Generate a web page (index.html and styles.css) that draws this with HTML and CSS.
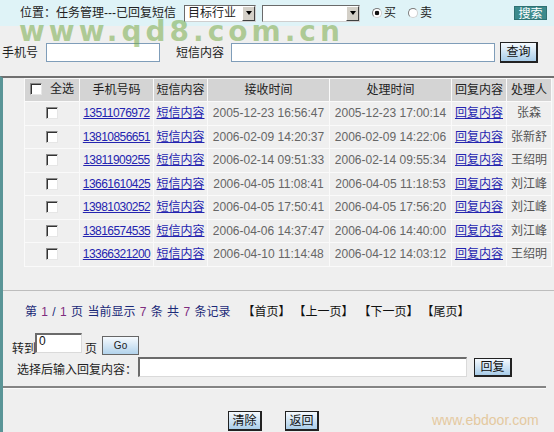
FILE: index.html
```html
<!DOCTYPE html>
<html lang="zh-CN">
<head>
<meta charset="utf-8">
<title>已回复短信</title>
<link rel="stylesheet" href="styles.css">
</head>
<body>
<div class="topbar">
  <span class="loc">位置：任务管理---已回复短信</span>
  <div class="select s1"><span class="sv">目标行业</span><span class="arr"></span></div>
  <div class="select s2"><span class="sv"></span><span class="arr"></span></div>
  <label class="rad"><input type="radio" name="bs" class="radio" checked><span>买</span></label>
  <label class="rad r2"><input type="radio" name="bs" class="radio"><span>卖</span></label>
  <span class="btn-search">搜索</span>
</div>
<div class="filter">
  <span class="lbl">手机号</span>
  <input type="text" class="txt in1">
  <span class="lbl l2">短信内容</span>
  <input type="text" class="txt in2">
  <button class="btn b-query">查询</button>
</div>
<div class="main">
  <div class="panel">
    <table class="grid">
      <colgroup>
        <col class="w1"><col class="w2"><col class="w3"><col class="w4"><col class="w5"><col class="w6"><col class="w7">
      </colgroup>
      <thead>
        <tr><th><span class="allsel"><input type="checkbox" class="chk"><span>全选</span></span></th><th>手机号码</th><th>短信内容</th><th>接收时间</th><th>处理时间</th><th>回复内容</th><th>处理人</th></tr>
      </thead>
      <tbody>
        <tr><td><input type="checkbox" class="chk"></td><td><a class="num" href="#">13511076972</a></td><td><a href="#">短信内容</a></td><td class="dt">2005-12-23 16:56:47</td><td class="dt">2005-12-23 17:00:14</td><td><a href="#">回复内容</a></td><td class="nm">张森</td></tr>
        <tr><td><input type="checkbox" class="chk"></td><td><a class="num" href="#">13810856651</a></td><td><a href="#">短信内容</a></td><td class="dt">2006-02-09 14:20:37</td><td class="dt">2006-02-09 14:22:06</td><td><a href="#">回复内容</a></td><td class="nm">张新舒</td></tr>
        <tr><td><input type="checkbox" class="chk"></td><td><a class="num" href="#">13811909255</a></td><td><a href="#">短信内容</a></td><td class="dt">2006-02-14 09:51:33</td><td class="dt">2006-02-14 09:55:34</td><td><a href="#">回复内容</a></td><td class="nm">王绍明</td></tr>
        <tr><td><input type="checkbox" class="chk"></td><td><a class="num" href="#">13661610425</a></td><td><a href="#">短信内容</a></td><td class="dt">2006-04-05 11:08:41</td><td class="dt">2006-04-05 11:18:53</td><td><a href="#">回复内容</a></td><td class="nm">刘江峰</td></tr>
        <tr><td><input type="checkbox" class="chk"></td><td><a class="num" href="#">13981030252</a></td><td><a href="#">短信内容</a></td><td class="dt">2006-04-05 17:50:41</td><td class="dt">2006-04-05 17:56:20</td><td><a href="#">回复内容</a></td><td class="nm">刘江峰</td></tr>
        <tr><td><input type="checkbox" class="chk"></td><td><a class="num" href="#">13816574535</a></td><td><a href="#">短信内容</a></td><td class="dt">2006-04-06 14:37:47</td><td class="dt">2006-04-06 14:40:00</td><td><a href="#">回复内容</a></td><td class="nm">刘江峰</td></tr>
        <tr><td><input type="checkbox" class="chk"></td><td><a class="num" href="#">13366321200</a></td><td><a href="#">短信内容</a></td><td class="dt">2006-04-10 11:14:48</td><td class="dt">2006-04-12 14:03:12</td><td><a href="#">回复内容</a></td><td class="nm">王绍明</td></tr>
      </tbody>
    </table>
  </div>
  <div class="pager">
    <span class="info">第 <b>1</b> / <b>1</b> 页 当前显示 <b>7</b> 条 共 <b>7</b> 条记录</span>
    <span class="nav first">【首页】</span>
    <span class="nav">【上一页】</span>
    <span class="nav third">【下一页】</span>
    <span class="nav">【尾页】</span>
  </div>
  <div class="goto">
    <span class="t">转到</span>
    <input type="text" class="inset in-page" value="0">
    <span class="t t-ye">页</span>
    <button class="btn-go">Go</button>
  </div>
  <div class="reply">
    <span class="t">选择后输入回复内容：</span>
    <input type="text" class="inset in-reply">
    <button class="btn b-reply">回复</button>
  </div>
  <div class="rule"></div>
  <div class="actions">
    <button class="btn b-act">清除</button>
    <button class="btn b-act">返回</button>
  </div>
</div>
<div class="wm-top">www.qd8.com.cn</div>
<div class="wm-bottom">www.ebdoor.com</div>
</body>
</html>
```

FILE: styles.css
```css
* { box-sizing: border-box; }
html, body { margin: 0; padding: 0; }
body {
  width: 554px;
  height: 432px;
  overflow: hidden;
  position: relative;
  background: #efefef;
  color: #222;
  font-family: "Liberation Sans", "Noto Sans CJK SC", sans-serif;
  font-size: 12px;
  line-height: 16px;
}

/* top bar */
.topbar {
  height: 26px;
  background: #dff3f7;
  display: flex;
  align-items: center;
  padding-left: 20px;
}
.loc { width: 164px; white-space: nowrap; color: #222; }
.select {
  display: flex;
  height: 17px;
  background: #fff;
  border: 1px solid #6a6a6a;
  border-right-color: #cfcfcf;
  border-bottom-color: #cfcfcf;
}
.s1 { width: 72px; }
.s2 { width: 98px; margin-left: 6px; }
.sv { flex: 1; padding-left: 3px; line-height: 15px; white-space: nowrap; }
.arr {
  width: 13px;
  background: #d4d0c8;
  border-top: 1px solid #fff;
  border-left: 1px solid #fff;
  border-right: 1px solid #404040;
  border-bottom: 1px solid #404040;
  display: flex;
  align-items: center;
  justify-content: center;
}
.arr::after {
  content: "";
  border-left: 3px solid transparent;
  border-right: 3px solid transparent;
  border-top: 4px solid #000;
}
.rad { display: flex; align-items: center; margin-left: 12px; }
.rad span { margin-left: 2px; }
.radio {
  appearance: none;
  -webkit-appearance: none;
  width: 10px;
  height: 10px;
  margin: 0;
  border-radius: 50%;
  border: 1px solid #7a7a7a;
  border-right-color: #d0d0d0;
  border-bottom-color: #d0d0d0;
  background: #fff;
}
.radio:checked { background: radial-gradient(circle, #111 0 2px, #fff 2.6px); }
.btn-search {
  margin-left: auto;
  margin-right: 7px;
  width: 33px;
  height: 14px;
  line-height: 14px;
  text-align: center;
  color: #fff;
  background: #3b8a8c;
  border: 1px solid #2f7173;
}

/* filter row */
.filter {
  height: 50px;
  padding-top: 3px;
  padding-left: 2px;
  display: flex;
  align-items: center;
}
.lbl { white-space: nowrap; }
.txt {
  height: 19px;
  margin: 0;
  padding: 0 2px;
  background: #fff;
  border: 1px solid #7f9db9;
  font: inherit;
}
.in1 { width: 114px; margin-left: 8px; }
.l2 { margin-left: 16px; }
.in2 { width: 264px; margin-left: 7px; }
.btn {
  margin: 0;
  padding: 0;
  font: inherit;
  color: #111;
  background: linear-gradient(#f6fafe, #a9cde9);
  border: 1px solid #222;
  border-right-width: 2px;
  border-bottom-width: 2px;
  text-align: center;
}
.b-query { width: 38px; height: 21px; margin-left: 5px; }

/* main area */
.main {
  height: 356px;
  border-left: 3px solid #5a9597;
  border-top: 2px solid #707070;
  display: flex;
  flex-direction: column;
}
.panel {
  flex: none;
  height: 213px;
  padding-left: 21px;
  border-bottom: 1px solid #bdbdbd;
}
.grid {
  width: 528px;
  border-collapse: separate;
  border-spacing: 1px;
  background: #fafafa;
  table-layout: fixed;
}
.w1 { width: 54px; }
.w2 { width: 73px; }
.w3 { width: 53px; }
.w4 { width: 121px; }
.w5 { width: 121px; }
.w6 { width: 54px; }
.w7 { width: 44px; }
.grid th {
  height: 22px;
  padding: 0;
  background: #d4d4d4;
  font-weight: normal;
  color: #222;
  text-align: center;
  white-space: nowrap;
}
.grid td {
  height: 22.5px;
  padding: 0;
  background: #efefef;
  text-align: center;
  white-space: nowrap;
  vertical-align: middle;
}
.allsel { display: inline-flex; align-items: center; gap: 8px; }
.chk {
  appearance: none;
  -webkit-appearance: none;
  display: block;
  width: 12px;
  height: 12px;
  margin: 0 auto;
  background: #fff;
  border-top: 1px solid #8a8a8a;
  border-left: 1px solid #8a8a8a;
  border-right: 1px solid #e6e6e6;
  border-bottom: 1px solid #e6e6e6;
  box-shadow: inset 1px 1px 0 #333;
}
.grid a { color: #2424b0; text-decoration: underline; }
.grid a.num { letter-spacing: -0.55px; }
.dt { color: #666; }
.nm { color: #555; }

/* pager */
.pager {
  flex: none;
  margin-top: 13px;
  padding-left: 22px;
  display: flex;
  align-items: center;
  white-space: nowrap;
}
.info { color: #1b2a78; word-spacing: 1px; }
.info b { font-weight: normal; color: #7e2c7e; }
.nav { color: #111; margin-left: 3px; }
.nav.first { margin-left: 12px; }
.nav.third { margin-left: 5px; }

/* goto */
.goto {
  flex: none;
  margin-top: 13px;
  height: 24px;
  padding-left: 9px;
  display: flex;
  align-items: flex-end;
}
.t { white-space: nowrap; }
.inset {
  margin: 0;
  padding: 0 2px;
  font: inherit;
  background: #fff;
  border-top: 2px solid #6b6b6b;
  border-left: 2px solid #6b6b6b;
  border-right: 1px solid #dadada;
  border-bottom: 1px solid #dadada;
}
.in-page {
  width: 47px;
  height: 20px;
  margin-bottom: 4px;
  margin-left: -1px;
  line-height: 12px;
  padding-top: 0;
  padding-bottom: 6px;
  color: #111;
}
.t-ye { margin-left: 3px; }
.btn-go {
  width: 37px;
  height: 19px;
  margin: 0 0 2px 5px;
  padding: 0;
  font-family: "Liberation Sans", sans-serif;
  font-size: 10px;
  color: #222;
  background: linear-gradient(#f6fafe, #b2d3ec);
  border: 1px solid #666;
}

/* reply */
.reply {
  flex: none;
  height: 21px;
  padding-left: 14px;
  display: flex;
  align-items: flex-end;
}
.in-reply { width: 329px; height: 20px; margin-left: 1px; margin-bottom: 1px; }
.b-reply { width: 38px; height: 19px; margin-left: 7px; margin-bottom: 1px; }

.rule {
  flex: none;
  margin-top: 8px;
  width: 543px;
  height: 3px;
  background: linear-gradient(#848484 0 2px, #fbfbfb 2px 3px);
}

.actions {
  flex: none;
  margin-top: 22px;
  display: flex;
  justify-content: center;
  gap: 23px;
  padding-right: 10px;
}
.b-act { width: 34px; height: 20px; }

/* watermarks */
.wm-top {
  position: absolute;
  left: 19px;
  top: 25px;
  font-family: "DejaVu Sans", sans-serif;
  font-weight: bold;
  font-size: 28px;
  line-height: 14px;
  letter-spacing: 4px;
  color: rgba(110, 165, 60, 0.5);
  pointer-events: none;
  white-space: nowrap;
}
.wm-bottom {
  position: absolute;
  left: 432px;
  top: 412px;
  font-family: "Liberation Sans", sans-serif;
  font-size: 14px;
  line-height: 16px;
  color: #e4c9a0;
  pointer-events: none;
  white-space: nowrap;
}
```
